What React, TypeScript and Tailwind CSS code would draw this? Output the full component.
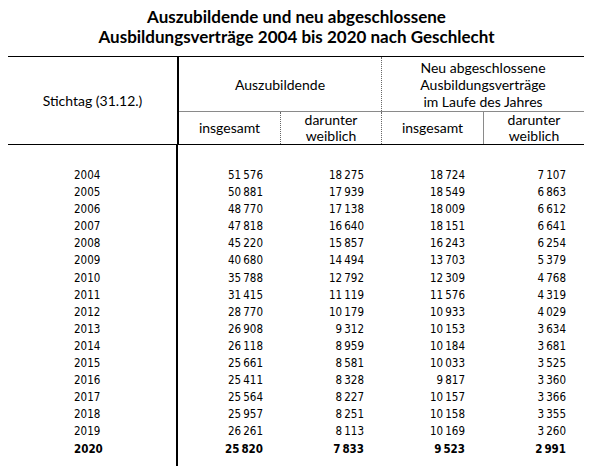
const rows: [string, string, string, string, string][] = [
  ['2004', '51 576', '18 275', '18 724', '7 107'],
  ['2005', '50 881', '17 939', '18 549', '6 863'],
  ['2006', '48 770', '17 138', '18 009', '6 612'],
  ['2007', '47 818', '16 640', '18 151', '6 641'],
  ['2008', '45 220', '15 857', '16 243', '6 254'],
  ['2009', '40 680', '14 494', '13 703', '5 379'],
  ['2010', '35 788', '12 792', '12 309', '4 768'],
  ['2011', '31 415', '11 119', '11 576', '4 319'],
  ['2012', '28 770', '10 179', '10 933', '4 029'],
  ['2013', '26 908', '9 312', '10 153', '3 634'],
  ['2014', '26 118', '8 959', '10 184', '3 681'],
  ['2015', '25 661', '8 581', '10 033', '3 525'],
  ['2016', '25 411', '8 328', '9 817', '3 360'],
  ['2017', '25 564', '8 227', '10 157', '3 366'],
  ['2018', '25 957', '8 251', '10 158', '3 355'],
  ['2019', '26 261', '8 113', '10 169', '3 260'],
  ['2020', '25 820', '7 833', '9 523', '2 991'],
]

// thin space between thousands groups
const fmt = (v: string) => v.replace(' ', '\u2009')

export default function App() {
  return (
    <div className="w-[593px] h-[466px] overflow-hidden bg-white text-black font-['Lato','Liberation_Sans',sans-serif]">
      {/* Title */}
      <h1 className="pt-[7px] text-center text-[17px] leading-[20px] font-bold">
        Auszubildende und neu abgeschlossene
        <br />
        Ausbildungsverträge 2004 bis 2020 nach Geschlecht
      </h1>

      <div className="ml-[8px] w-[576px] mt-[9px]">
        {/* Header */}
        <div className="flex border-y border-black text-[14px] leading-[17px]">
          <div className="w-[171px] h-[87px] border-r-2 border-black flex items-center justify-center">
            Stichtag (31.12.)
          </div>
          <div className="flex-1 flex flex-col">
            <div className="flex h-[55px] border-b border-[#8a8a8a]">
              <div className="w-[203px] border-r border-dotted border-[#666] flex items-center justify-center">
                Auszubildende
              </div>
              <div className="flex-1 flex items-center justify-center text-center">
                Neu abgeschlossene
                <br />
                Ausbildungsverträge
                <br />
                im Laufe des Jahres
              </div>
            </div>
            <div className="flex h-[32px] text-center leading-[16px]">
              <div className="w-[102px] border-r border-dotted border-[#666] flex items-center justify-center">insgesamt</div>
              <div className="w-[101px] border-r border-dotted border-[#666] flex items-center justify-center">
                darunter
                <br />
                weiblich
              </div>
              <div className="w-[102px] border-r border-[#8a8a8a] flex items-center justify-center">insgesamt</div>
              <div className="flex-1 flex items-center justify-center">
                darunter
                <br />
                weiblich
              </div>
            </div>
          </div>
        </div>

        {/* Body */}
        <div className="flex font-['DejaVu_Sans_Condensed','DejaVu_Sans',sans-serif] text-[11.5px] leading-[17.1px]">
          <div className="w-[171px] border-r-2 border-black pt-[22px] pb-[20px] pl-[66px]">
            {rows.map((r, i) => (
              <div key={r[0]} className={i === rows.length - 1 ? 'font-bold' : ''}>
                {r[0]}
              </div>
            ))}
          </div>
          <div className="flex-1 pt-[22px]">
            {rows.map((r, i) => (
              <div
                key={r[0]}
                className={`grid grid-cols-[102px_101px_102px_101px] text-right whitespace-nowrap ${i === rows.length - 1 ? 'font-bold' : ''}`}
              >
                <span className="pr-[17px]">{fmt(r[1])}</span>
                <span className="pr-[17px]">{fmt(r[2])}</span>
                <span className="pr-[18px]">{fmt(r[3])}</span>
                <span className="pr-[18px]">{fmt(r[4])}</span>
              </div>
            ))}
          </div>
        </div>
      </div>
    </div>
  )
}
